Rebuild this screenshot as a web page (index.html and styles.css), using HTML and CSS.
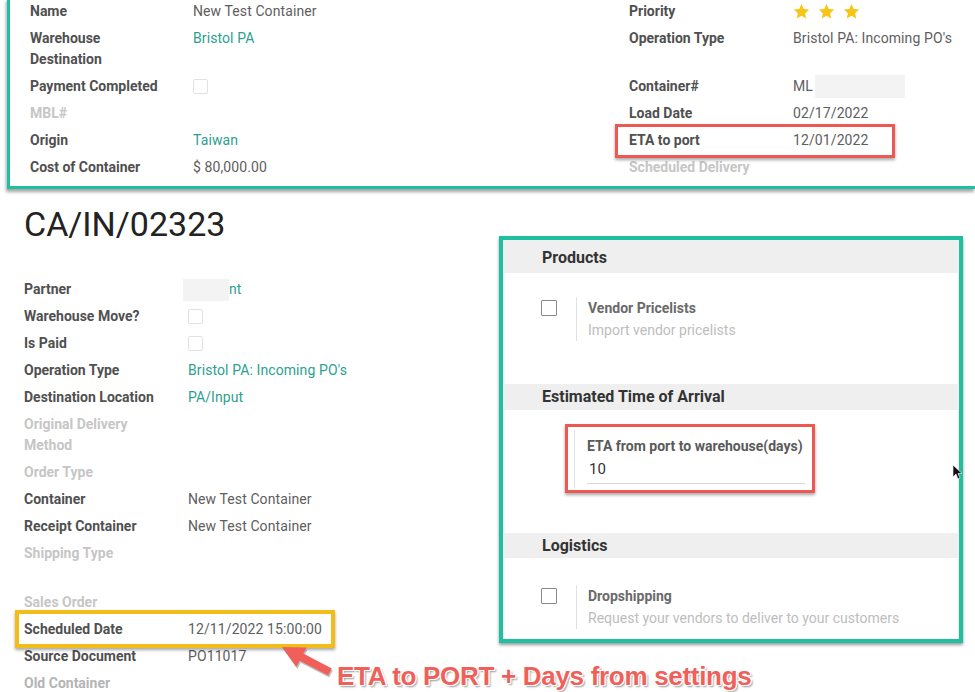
FILE: index.html
```html
<!DOCTYPE html>
<html lang="en">
<head>
<meta charset="utf-8">
<title>CA/IN/02323</title>
<link rel="stylesheet" href="styles.css">
</head>
<body>
<div class="page">
  <section class="top-card">
    <div class="grp grp-left">
      <div class="row"><span class="lbl">Name</span><span class="val">New Test Container</span></div>
      <div class="row"><span class="lbl">Warehouse Destination</span><span class="val link">Bristol PA</span></div>
      <div class="row"><span class="lbl">Payment Completed</span><span class="val"><span class="cb"></span></span></div>
      <div class="row"><span class="lbl muted">MBL#</span><span class="val"></span></div>
      <div class="row"><span class="lbl">Origin</span><span class="val link">Taiwan</span></div>
      <div class="row"><span class="lbl">Cost of Container</span><span class="val">$ 80,000.00</span></div>
    </div>
    <div class="grp grp-right">
      <div class="row"><span class="lbl">Priority</span>
        <span class="val stars">
          <svg class="star" viewBox="0 0 24 24"><path d="M12 1.5l3.2 7 7.6.8-5.7 5.1 1.6 7.5L12 18l-6.7 3.9 1.6-7.5L1.2 9.3l7.6-.8z"/></svg>
          <svg class="star" viewBox="0 0 24 24"><path d="M12 1.5l3.2 7 7.6.8-5.7 5.1 1.6 7.5L12 18l-6.7 3.9 1.6-7.5L1.2 9.3l7.6-.8z"/></svg>
          <svg class="star" viewBox="0 0 24 24"><path d="M12 1.5l3.2 7 7.6.8-5.7 5.1 1.6 7.5L12 18l-6.7 3.9 1.6-7.5L1.2 9.3l7.6-.8z"/></svg>
        </span>
      </div>
      <div class="row"><span class="lbl">Operation Type</span><span class="val">Bristol PA: Incoming PO's</span></div>
      <div class="spacer-21"></div>
      <div class="row"><span class="lbl">Container#</span><span class="val">ML<span class="redact redact-ml"></span></span></div>
      <div class="row"><span class="lbl">Load Date</span><span class="val">02/17/2022</span></div>
      <div class="row hl-red"><span class="lbl">ETA to port</span><span class="val">12/01/2022</span></div>
      <div class="row"><span class="lbl muted">Scheduled Delivery</span><span class="val"></span></div>
    </div>
  </section>

  <div class="main">
    <div class="left-col">
      <h1 class="title">CA/IN/02323</h1>
      <div class="form">
        <div class="row row-f"><span class="lbl">Partner</span><span class="val link"><span class="redact redact-partner"></span>nt</span></div>
        <div class="row row-f"><span class="lbl">Warehouse Move?</span><span class="val"><span class="cb"></span></span></div>
        <div class="row row-f"><span class="lbl">Is Paid</span><span class="val"><span class="cb"></span></span></div>
        <div class="row row-f"><span class="lbl">Operation Type</span><span class="val link">Bristol PA: Incoming PO's</span></div>
        <div class="row row-f"><span class="lbl">Destination Location</span><span class="val link">PA/Input</span></div>
        <div class="row row-f"><span class="lbl muted">Original Delivery Method</span><span class="val"></span></div>
        <div class="row row-f"><span class="lbl muted">Order Type</span><span class="val"></span></div>
        <div class="row row-f"><span class="lbl">Container</span><span class="val">New Test Container</span></div>
        <div class="row row-f"><span class="lbl">Receipt Container</span><span class="val">New Test Container</span></div>
        <div class="row row-f"><span class="lbl muted">Shipping Type</span><span class="val"></span></div>
        <div class="spacer-22"></div>
        <div class="row row-f"><span class="lbl muted">Sales Order</span><span class="val"></span></div>
        <div class="row row-f hl-yellow"><span class="lbl">Scheduled Date</span><span class="val">12/11/2022 15:00:00</span></div>
        <div class="row row-f"><span class="lbl">Source Document</span><span class="val">PO11017</span></div>
        <div class="row row-f"><span class="lbl muted2">Old Container</span><span class="val"></span></div>
      </div>
    </div>

    <div class="settings">
      <div class="band band-first">Products</div>
      <div class="item item-first">
        <span class="cb cb-set"></span>
        <div class="item-text">
          <div class="item-title">Vendor Pricelists</div>
          <div class="item-desc">Import vendor pricelists</div>
        </div>
      </div>
      <div class="band band-eta">Estimated Time of Arrival</div>
      <div class="eta-box">
        <div class="eta-field">
          <div class="eta-label">ETA from port to warehouse(days)</div>
          <div class="eta-value">10</div>
        </div>
      </div>
      <div class="band band-log">Logistics</div>
      <div class="item item-last">
        <span class="cb cb-set"></span>
        <div class="item-text">
          <div class="item-title">Dropshipping</div>
          <div class="item-desc">Request your vendors to deliver to your customers</div>
        </div>
      </div>
    </div>
  </div>

  <svg class="note-arrow" viewBox="270 638 70 45" width="70" height="45">
    <polygon class="arrow-shadow" points="283,649 307.6,649.4 304.3,655.6 332.8,670.4 329.2,677.5 300.7,662.7 297.4,669" />
    <polygon class="arrow-fill" points="282,647 306.6,647.4 303.3,653.6 331.8,668.4 328.2,675.5 299.7,660.7 296.4,667" />
  </svg>
  <div class="note-text">ETA to PORT + Days from settings</div>

  <svg class="cursor" viewBox="0 0 10 16" width="10" height="16">
    <path d="M1 1 L1 13 L4 10 L6 15 L8 14 L6 9.5 L10 9.5 Z" fill="#111" stroke="#fff" stroke-width="0.6"/>
  </svg>
</div>
</body>
</html>
```

FILE: styles.css
```css
* { box-sizing: border-box; }

body {
  margin: 0;
  background: #fff;
  font-family: Roboto, "Liberation Sans", Arial, sans-serif;
  font-size: 14px;
  color: #5a5a5a;
}

.page {
  position: relative;
  width: 975px;
  height: 692px;
  overflow: hidden;
}

/* ---------- top card ---------- */
.top-card {
  display: flex;
  margin: -2px 0 0 7px;
  padding: 0 0 5px 20px;
  border-left: 3px solid #1fbf9f;
  border-bottom: 3px solid #1fbf9f;
  box-shadow: -1px 3px 3px rgba(0, 0, 0, 0.35);
}

.grp-left { width: 599px; }
.grp-right { flex: 1; }

.row {
  display: grid;
  grid-template-columns: 140px 1fr;
  column-gap: 23px;
  padding: 3px 0;
  line-height: 21px;
}

.grp-right .row { column-gap: 24px; }
.row-f { column-gap: 24px; }

.lbl {
  font-weight: 700;
  color: #505050;
}
.lbl.muted { color: #c6c6c6; }
.lbl.muted2 { color: #b4b4b4; }

.val {
  display: flex;
  align-items: center;
  height: 21px;
  color: #5e5e5e;
  letter-spacing: 0.1px;
  white-space: nowrap;
}
.link { color: #2c9f8f; }

.spacer-21 { height: 21px; }
.spacer-22 { height: 22px; }

.cb {
  display: inline-block;
  width: 15px;
  height: 15px;
  border: 1px solid #e2e2e2;
  border-radius: 2px;
  background: #fff;
  flex: none;
}

.stars { gap: 8px; }
.star {
  width: 17px;
  height: 17px;
  fill: #f5c518;
}

.redact {
  display: inline-block;
  background: #f3f3f3;
  flex: none;
}
.redact-ml {
  width: 90px;
  height: 23px;
  margin-left: 2px;
}
.redact-partner {
  width: 46px;
  height: 22px;
  margin-left: -5px;
}

/* highlighted rows (annotation frames) */
.hl-red, .hl-yellow { position: relative; }
.hl-red::before {
  content: "";
  position: absolute;
  left: -14px;
  right: 80px;
  top: -3px;
  bottom: -4px;
  border: 3px solid #ee5852;
  box-shadow: 0 2px 3px rgba(0, 0, 0, 0.35);
}
.hl-yellow::before {
  content: "";
  position: absolute;
  left: -9px;
  right: 164px;
  top: -6px;
  bottom: -5px;
  border: 4px solid #f2bd1b;
  box-shadow: 0 2px 3px rgba(0, 0, 0, 0.35);
}

/* ---------- main ---------- */
.main {
  display: flex;
  align-items: flex-start;
}

.left-col {
  width: 499px;
  padding-left: 24px;
}

.title {
  margin: 15px 0 0;
  font-size: 34px;
  line-height: 40px;
  font-weight: 400;
  color: #222;
}

.form { margin-top: 32px; }

/* ---------- settings panel ---------- */
.settings {
  width: 464px;
  height: 407px;
  margin-top: 47px;
  border: 4px solid #1fbf9f;
  box-shadow: 0 2px 3px rgba(0, 0, 0, 0.4), inset 0 1px 2px rgba(0, 0, 0, 0.3);
  background: #fff;
}

.band {
  background: #efefef;
  font-weight: 700;
  font-size: 16px;
  color: #333;
  padding-left: 39px;
}
.band-first {
  height: 33px;
  padding-top: 2px;
  line-height: 31px;
}
.band-eta {
  margin-top: 43px;
  height: 26px;
  line-height: 26px;
}
.band-log {
  margin-top: 40px;
  height: 25px;
  line-height: 25px;
}

.item {
  display: flex;
  align-items: flex-start;
  padding-left: 38px;
}
.item-first { padding-top: 24px; }
.item-last { padding-top: 27px; }

.cb-set {
  margin-top: 3px;
  width: 16px;
  height: 16px;
  border: 1px solid #8a8a8a;
  border-radius: 1px;
}

.item-text {
  margin-left: 19px;
  padding-left: 11px;
  border-left: 1px solid #e0e0e0;
  line-height: 22px;
}
.item-title {
  font-weight: 700;
  color: #6a6a6a;
}
.item-desc { color: #bdbdbd; }

.eta-box {
  margin: 14px 0 0 62px;
  width: 250px;
  height: 69px;
  border: 3px solid #ee5852;
  box-shadow: 0 2px 3px rgba(0, 0, 0, 0.35);
  padding: 3px 7px 2px 6px;
}
.eta-field {
  height: 100%;
  border-left: 1px solid #e0e0e0;
  padding: 6px 0 0 12px;
}
.eta-label {
  font-weight: 700;
  color: #5a5a5a;
  line-height: 21px;
  white-space: nowrap;
}
.eta-value {
  margin-top: 2px;
  padding: 0 0 3px 2px;
  border-bottom: 1px solid #d8d8d8;
  font-size: 15px;
  line-height: 21px;
  color: #333;
}

/* ---------- annotations ---------- */
.note-arrow {
  position: absolute;
  left: 270px;
  top: 638px;
}
.arrow-fill { fill: #f0605a; }
.arrow-shadow { fill: rgba(0, 0, 0, 0.25); }

.note-text {
  position: absolute;
  left: 337px;
  top: 662px;
  font-family: "Liberation Sans", Arial, sans-serif;
  font-weight: 700;
  font-size: 26px;
  line-height: 28px;
  letter-spacing: -0.3px;
  color: #f0605a;
  white-space: nowrap;
  text-shadow:
    1px 0 0 #fff, -1px 0 0 #fff, 0 1px 0 #fff, 0 -1px 0 #fff,
    1px 1px 0 #fff, -1px -1px 0 #fff, 1px -1px 0 #fff, -1px 1px 0 #fff,
    2px 2px 2px rgba(0, 0, 0, 0.4);
}

.cursor {
  position: absolute;
  left: 952px;
  top: 464px;
}
```
